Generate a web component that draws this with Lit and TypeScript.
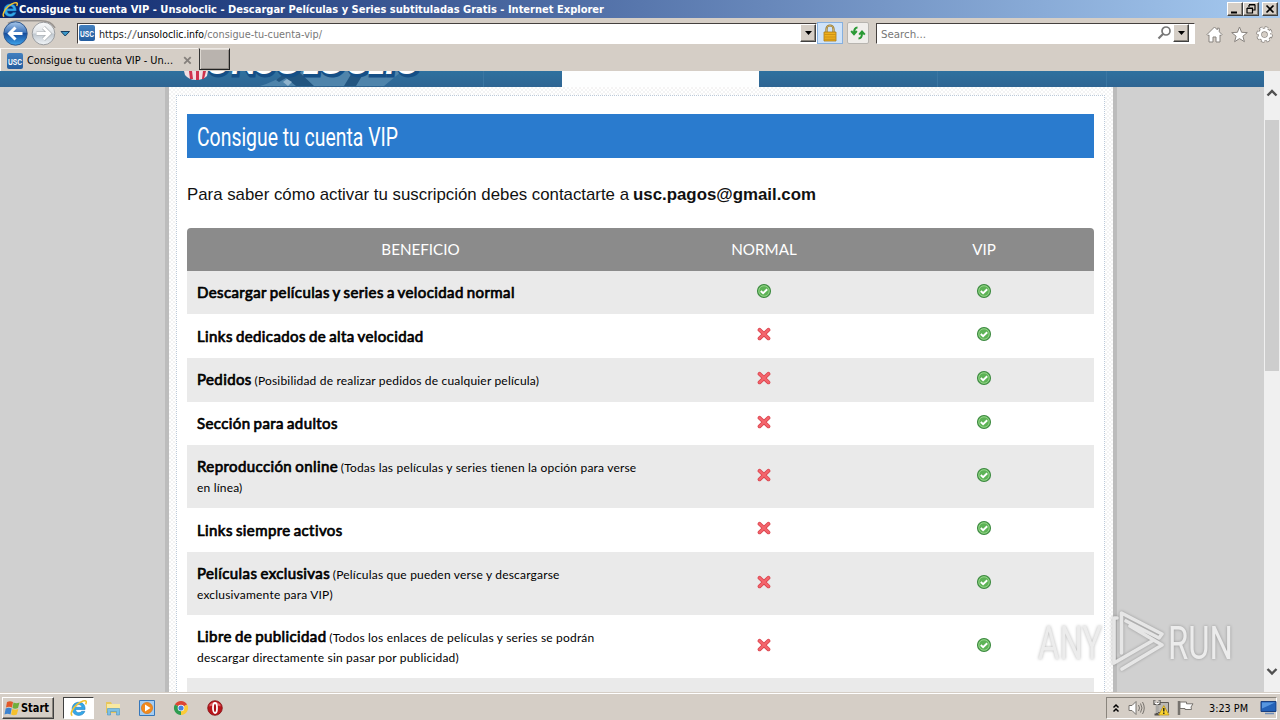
import { LitElement, html, svg, css, nothing } from 'lit';
import { customElement, property } from 'lit/decorators.js';

interface Benefit {
  name: string;
  note?: string[];
  normal: boolean;
}

const BENEFITS: Benefit[] = [
  { name: 'Descargar películas y series a velocidad normal', normal: true },
  { name: 'Links dedicados de alta velocidad', normal: false },
  { name: 'Pedidos', note: ['(Posibilidad de realizar pedidos de cualquier película)'], normal: false },
  { name: 'Sección para adultos', normal: false },
  { name: 'Reproducción online', note: ['(Todas las películas y series tienen la opción para verse', 'en línea)'], normal: false },
  { name: 'Links siempre activos', normal: false },
  { name: 'Películas exclusivas', note: ['(Películas que pueden verse y descargarse', 'exclusivamente para VIP)'], normal: false },
  { name: 'Libre de publicidad', note: ['(Todos los enlaces de películas y series se podrán', 'descargar directamente sin pasar por publicidad)'], normal: false },
];

// One line of text squeezed or stretched to a fixed width
@customElement('fit-text')
export class FitText extends LitElement {
  @property() text = '';
  @property({ type: Number }) width = 100;
  @property({ type: Number }) height = 16;
  @property({ type: Number }) base = 12;

  static styles = css`
    :host { display: block; flex: none; }
    svg { display: block; overflow: visible; }
    text { fill: currentColor; white-space: pre; }
  `;

  render() {
    return html`<svg width=${this.width} height=${this.height}>
      <text x="0" y=${this.base} textLength=${this.width} lengthAdjust="spacingAndGlyphs">${this.text}</text>
    </svg>`;
  }
}

const ieGlyph = svg`
  <path d="M14.2 9.4H5.2c.2 2 1.400 3 3.200 3 1.200 0 2-.4 2.600-1.300h3c-.9 2.500-2.900 3.900-5.700 3.900-3.800 0-6.300-2.500-6.300-6.200S4.600 2.600 8.300 2.600c3.900 0 6.100 2.600 5.900 6.800zM5.300 7.300h5.900c-.2-1.600-1.300-2.500-2.900-2.500s-2.700.9-3 2.500z" fill="#35a8e8" stroke="#1673b8" stroke-width=".5"/>
  <path d="M2.200 15.200C-.2 14 2 8.600 6.500 4.800 10.600 1.300 15 .1 15.300 2.200c.1.700-.2 1.500-.6 2.300" fill="none" stroke="#f2c230" stroke-width="1.500"/>`;

const tick = html`<svg width="16" height="16" viewBox="0 0 16 16">
  <circle cx="8" cy="8" r="6.500" fill="#5db356" stroke="#3f8a43" stroke-width="1.100"/>
  <circle cx="8" cy="8" r="5.200" fill="none" stroke="#9bd78e" stroke-width=".9"/>
  <path d="M4.800 8l2.300 2.200L11.200 6.200" fill="none" stroke="#fff" stroke-width="1.900"/>
</svg>`;

const cross = html`<svg width="16" height="16" viewBox="0 0 16 16">
  <path d="M3.600 3.900l8.800 8.400M12.400 3.900l-8.800 8.400" stroke="#d9434e" stroke-width="3.900" stroke-linecap="round"/>
  <path d="M3.700 4l8.600 8.200M12.300 4l-8.600 8.200" stroke="#f4656c" stroke-width="2.300" stroke-linecap="square"/>
</svg>`;

@customElement('usc-icon')
export class UscIcon extends LitElement {
  static styles = css`
    :host {
      display: block;
      flex: none;
      width: 16px;
      height: 16px;
      border-radius: 2px;
      background: linear-gradient(#4380bf, #245d9f);
    }
    text { font: bold 9px 'Liberation Sans', sans-serif; fill: #fff; }
    svg { display: block; overflow: visible; }
  `;

  render() {
    return html`<svg width="16" height="16"><text x="1" y="11.500" textLength="14" lengthAdjust="spacingAndGlyphs">USC</text></svg>`;
  }
}

@customElement('browser-chrome')
export class BrowserChrome extends LitElement {
  static styles = css`
    :host {
      display: block;
      height: 71px;
      flex: none;
      background: #d5cec6;
      font: 11px 'DejaVu Sans Condensed', 'DejaVu Sans', sans-serif;
      color: #000;
    }
    svg { display: block; flex: none; }
    .title {
      display: flex;
      align-items: center;
      height: 18px;
      box-sizing: border-box;
      padding: 0 2px;
      background: linear-gradient(90deg, #0a246a, #a6caf0);
      color: #fff;
      font-weight: bold;
    }
    .title fit-text { margin-left: 1px; }
    .wins { display: flex; margin-left: auto; }
    .btn {
      box-sizing: border-box;
      width: 16px;
      height: 14px;
      background: #d5cec6;
      border: 1px solid;
      border-color: #fff #404040 #404040 #fff;
      box-shadow: inset -1px -1px #8a857d;
    }
    .btn.gap { margin-left: 3px; }
    .nav {
      display: flex;
      align-items: center;
      height: 30px;
      padding-left: 2px;
      box-sizing: border-box;
    }
    .field {
      display: flex;
      align-items: center;
      box-sizing: border-box;
      height: 21px;
      background: #fff;
      border: 1px solid;
      border-color: #45403e #fff #fff #45403e;
    }
    .address { width: 740px; margin-left: 5px; padding-left: 1px; color: #777; }
    .scheme { margin-left: 4px; color: #222; }
    .slashes { color: #777; }
    .host { color: #000; }
    .drop {
      box-sizing: border-box;
      width: 16px;
      height: 18px;
      margin-left: auto;
      background: #d5cec6;
      border: 1px solid;
      border-color: #fff #404040 #404040 #fff;
      box-shadow: inset -1px -1px #8a857d;
    }
    .tool {
      display: grid;
      place-items: center;
      box-sizing: border-box;
      width: 26px;
      height: 22px;
      border: 1px solid #86b0df;
      background: #cfe3f9;
    }
    .tool.refresh {
      width: 22px;
      margin-left: 4px;
      border-color: #b8b5b0;
      border-radius: 2px;
      background: #f0eeeb;
    }
    .search { width: 319px; margin-left: 7px; padding: 0 5px 0 4px; color: #777; }
    .search .mag { margin-left: auto; }
    .search .drop { margin-left: 1px; }
    .links { display: flex; gap: 8px; margin-left: 11px; padding-top: 3px; }
    .tabs { display: flex; height: 23px; }
    .tab {
      display: flex;
      align-items: center;
      box-sizing: border-box;
      width: 198px;
      padding: 1px 6px 0 6px;
      border-top: 1px solid #f6f3ef;
      border-left: 1px solid #fff;
    }
    .tab fit-text { margin-left: 4px; }
    .tab svg { margin-left: auto; }
    .newtab {
      box-sizing: border-box;
      width: 31px;
      height: 22px;
      margin-left: 1px;
      background: #b9b3ae;
      border: 1px solid;
      border-color: #ece8e4 #222 #222 #333;
      box-shadow: inset 1px 1px #ddd8d2, inset -1px -1px #918b86;
    }
  `;

  private _dropArrow() {
    return html`<svg width="14" height="16"><path d="M4 6h7L7.500 10z" fill="#000"/></svg>`;
  }

  render() {
    return html`
      <div class="title">
        <svg width="16" height="17" viewBox="0 0 16 16">${ieGlyph}</svg>
        <fit-text text="Consigue tu cuenta VIP - Unsoloclic - Descargar Películas y Series subtituladas Gratis - Internet Explorer" width="585" height="18" base="13"></fit-text>
        <div class="wins">
          <div class="btn"><svg width="14" height="12"><path d="M3 9.500h6" stroke="#000" stroke-width="2"/></svg></div>
          <div class="btn"><svg width="14" height="12"><path d="M5 2h6v5H9M5 1.500h6M5 2v2M3 5.500h5.500v4.500H3zM3 5h6" fill="none" stroke="#000" stroke-width="1.200"/></svg></div>
          <div class="btn gap"><svg width="14" height="12"><path d="M3.500 2.500l7 7M10.500 2.500l-7 7" stroke="#000" stroke-width="1.700"/></svg></div>
        </div>
      </div>
      <div class="nav">
        <svg width="70" height="30" viewBox="2 18 70 30">
          <defs>
            <linearGradient id="back" x2="0" y2="1">
              <stop offset="0" stop-color="#a9c8ea"/><stop offset=".45" stop-color="#3d74bb"/>
              <stop offset=".5" stop-color="#164d9d"/><stop offset="1" stop-color="#3fa5ec"/>
            </linearGradient>
            <linearGradient id="fwd" x2="0" y2="1">
              <stop offset="0" stop-color="#f9fafb"/><stop offset=".48" stop-color="#dfe3e7"/>
              <stop offset=".52" stop-color="#bfc7cf"/><stop offset="1" stop-color="#f1f5f8"/>
            </linearGradient>
          </defs>
          <path d="M8 23.500q4-2.800 9-2.700h24q10 0 14 7" fill="none" stroke="#98938f" stroke-width="1.600"/>
          <circle cx="15.500" cy="33.500" r="11.700" fill="url(#back)" stroke="#31598e"/>
          <circle cx="43.500" cy="33.500" r="11.300" fill="url(#fwd)" stroke="#9b9da0"/>
          <path d="M22.500 33.500H10M15.500 27.500l-6 6 6 6" fill="none" stroke="#fff" stroke-width="3"/>
          <path d="M36.500 33.500H49M43.500 27.500l6 6-6 6" fill="none" stroke="#a8acb0" stroke-width="4"/>
          <path d="M36.500 33.500H49M43.500 27.500l6 6-6 6" fill="none" stroke="#fff" stroke-width="2.800"/>
          <path d="M61 31.500h8.500L65.200 36z" fill="#3b98c9" stroke="#173e61"/>
        </svg>
        <div class="field address">
          <usc-icon></usc-icon>
          <fit-text class="scheme" text="https:" width="28" height="19" base="14"></fit-text>
          <fit-text class="slashes" text="//" width="10" height="19" base="14"></fit-text>
          <fit-text class="host" text="unsoloclic.info" width="67" height="19" base="14"></fit-text>
          <fit-text text="/consigue-tu-cuenta-vip/" width="118" height="19" base="14"></fit-text>
          <div class="drop">${this._dropArrow()}</div>
        </div>
        <div class="tool">
          <svg width="16" height="18" viewBox="0 0 16 18">
            <path d="M4.500 9V5a3.500 3.500 0 0 1 7 0v4" fill="none" stroke="#92742c" stroke-width="2.200"/>
            <path d="M4.500 9V5a3.500 3.500 0 0 1 7 0v4" fill="none" stroke="#d9bf79" stroke-width=".8"/>
            <path d="M2 8h12v9H2z" fill="#eeb01e" stroke="#a97812" stroke-width=".8"/>
            <path d="M2.500 10.500h11M2.500 13h11M2.500 15.300h11" stroke="#c58b12" stroke-width=".8"/>
          </svg>
        </div>
        <div class="tool refresh">
          <svg width="16" height="16" viewBox="0 0 16 16">
            <path d="M7.500 2.500Q4 2.500 4 8M1.200 6L4 9.300 6.800 6M8.500 13.500q3.500 0 3.500-5.500M9.200 9.700L12 6.500l2.800 3.200" fill="none" stroke="#2a9a35" stroke-width="2"/>
          </svg>
        </div>
        <div class="field search">
          <fit-text text="Search..." width="45" height="19" base="14"></fit-text>
          <svg class="mag" width="15" height="16"><circle cx="9" cy="6" r="4" fill="none" stroke="#777" stroke-width="1.700"/><path d="M6 9l-4.500 4.500" stroke="#777" stroke-width="2.200"/></svg>
          <div class="drop">${this._dropArrow()}</div>
        </div>
        <div class="links">
          <svg width="17" height="17" viewBox="0 0 17 17"><path d="M1 8.500L8.500 1l2.800 2.800V2.200h2v3.600L16 8.500l-1 1.200-1-.8V16h-4v-5H7v5H3V8.900l-1 .8z" fill="#fff" stroke="#88837e"/></svg>
          <svg width="17" height="17" viewBox="0 0 17 17"><path d="M8.500 1l2.100 5.300 5.700.3-4.400 3.600 1.500 5.500-4.900-3.100-4.900 3.100 1.500-5.500L.7 6.600l5.700-.3z" fill="#fff" stroke="#88837e"/></svg>
          <svg width="17" height="17" viewBox="0 0 17 17">
            <circle cx="8.500" cy="8.500" r="6.800" fill="none" stroke="#88837e" stroke-width="3" stroke-dasharray="3.300 2.040"/>
            <circle cx="8.500" cy="8.500" r="4.700" fill="none" stroke="#88837e" stroke-width="4.200"/>
            <circle cx="8.500" cy="8.500" r="6.500" fill="none" stroke="#fff" stroke-width="2" stroke-dasharray="2.500 2.600"/>
            <circle cx="8.500" cy="8.500" r="4.600" fill="none" stroke="#fff" stroke-width="2.700"/>
          </svg>
        </div>
      </div>
      <div class="tabs">
        <div class="tab">
          <usc-icon></usc-icon>
          <fit-text text="Consigue tu cuenta VIP - Un..." width="146" height="20" base="13"></fit-text>
          <svg width="9" height="9"><path d="M1.200 1.200l6.500 6.500M7.700 1.200L1.200 7.700" stroke="#85807c" stroke-width="1.800"/></svg>
        </div>
        <div class="newtab"></div>
      </div>
    `;
  }
}

@customElement('site-page')
export class SitePage extends LitElement {
  static styles = css`
    :host {
      display: flex;
      flex: 1;
      min-height: 0;
      font-family: Lato, sans-serif;
      color: #000;
    }
    svg { display: block; }
    .view {
      display: flex;
      flex-direction: column;
      width: 1264px;
      background: #d0d0d0;
      overflow: hidden;
    }
    .header {
      display: flex;
      flex: none;
      height: 16px;
      overflow: hidden;
      background: linear-gradient(#2f719f, #2f6593);
    }
    .logo { width: 483px; flex: none; }
    .logo text { font: italic 900 34px Lato, sans-serif; }
    .sep { flex: none; box-sizing: border-box; border-left: 1px solid #3b76a2; }
    .s1 { width: 79px; }
    .on { width: 197px; background: #fdfefe; }
    .s2 { width: 178px; border: 0; }
    .s3 { width: 169px; }
    .s4 { flex: 1; }
    .wrap {
      flex: 1;
      min-height: 0;
      display: flex;
      box-sizing: border-box;
      width: 952px;
      margin-left: 165px;
      padding: 8px 8px 0 7px;
      border: solid #bcbcbc;
      border-width: 0 4px;
      background: repeating-conic-gradient(#f4f4f4 0 25%, #fff 0 50%) 0 0 / 4px 4px;
    }
    .box {
      flex: 1;
      min-height: 0;
      overflow: hidden;
      box-sizing: border-box;
      padding: 18px 10px 0;
      border: 1px dotted #bccada;
      border-bottom: 0;
      background: #fff;
    }
    h1 {
      display: flex;
      align-items: center;
      box-sizing: border-box;
      height: 44px;
      margin: 0;
      padding-left: 10px;
      background: #2a7bce;
      color: #fff;
      font: 400 25.500px Roboto, sans-serif;
      -webkit-text-stroke: .4px #fff;
    }
    p {
      display: flex;
      align-items: center;
      height: 70px;
      margin: 0;
      padding-top: 4px;
      box-sizing: border-box;
      font: 17px 'Liberation Sans', Arial, sans-serif;
      color: #111;
    }
    .mail { margin-left: 4px; font-weight: bold; }
    .row {
      display: grid;
      grid-template-columns: 467px 220px 220px;
      align-items: center;
      justify-items: center;
      box-sizing: border-box;
      height: 43.6px;
      padding-top: 1.4px;
    }
    .row.tall { height: 63.1px; }
    .row.odd { background: #eaeaea; }
    .row.head {
      height: 42.8px;
      padding: 0 0 1px;
      border-radius: 4px 4px 0 0;
      background: #8b8b8b;
      color: #fff;
      font-size: 15.2px;
    }
    .cell {
      justify-self: start;
      padding-left: 10px;
      font-size: 12px;
      line-height: 20.500px;
      letter-spacing: .19px;
      white-space: nowrap;
    }
    .cell b {
      font-size: 15px;
      font-weight: 400;
      letter-spacing: .4px;
      word-spacing: -1.1px;
      margin-right: -.5px;
      -webkit-text-stroke: .7px #000;
    }
    .mark { margin-top: -5px; }
    .bar {
      display: flex;
      flex-direction: column;
      width: 16px;
      background: #f0f0f0;
    }
    .thumb { height: 251px; margin: 18px 0 auto 1px; width: 14px; background: #cdcdcd; }
    .up { margin-top: 15px; }
    .down { margin-bottom: 13px; }
  `;

  private _row(item: Benefit, index: number) {
    const tall = item.note && item.note.length > 1;
    return html`
      <div class="row ${index % 2 ? '' : 'odd'} ${tall ? 'tall' : ''}">
        <div class="cell"><b>${item.name}</b>${item.note ? html` ${item.note.map((line, i) => html`${i ? html`<br>` : nothing}${line}`)}` : nothing}</div>
        <div class="mark">${item.normal ? tick : cross}</div>
        <div class="mark">${tick}</div>
      </div>
    `;
  }

  render() {
    return html`
      <div class="view">
        <div class="header">
          <svg class="logo" width="483" height="16">
            <path d="M292 0h110l-18 15H260q14-4 32-15z" fill="#4f84ab"/>
            <path d="M276 9l12-9h10l16 15h-18l-10-8-7 4zM353 0h12l-9 15h-12z" fill="#225580"/>
            <path d="M283 11l4-3 5 3-4 4z" fill="#8fb3cd"/>
            <path d="M184 0h24l-1 5q-4 4-11 4t-11-5z" fill="#f1dfe3"/>
            <path d="M189 0h3l1 8h-3zM196 0h3v9h-3zM203 0h3l-2 8h-2z" fill="#cf334d"/>
            <text x="207" y="4.500" fill="#154f86" stroke="#154f86" stroke-width="3" textLength="212" lengthAdjust="spacingAndGlyphs">UNSOLOCLIC</text>
            <text x="206" y="2.500" fill="#fff" textLength="211" lengthAdjust="spacingAndGlyphs">UNSOLOCLIC</text>
          </svg>
          <div class="sep s1"></div>
          <div class="on"></div>
          <div class="sep s2"></div>
          <div class="sep s3"></div>
          <div class="sep s4"></div>
        </div>
        <div class="wrap">
          <div class="box">
            <h1><fit-text text="Consigue tu cuenta VIP" width="201" height="44" base="32"></fit-text></h1>
            <p>
              <fit-text text="Para saber cómo activar tu suscripción debes contactarte a" width="442" height="22" base="16"></fit-text>
              <fit-text class="mail" text="usc.pagos@gmail.com" width="183" height="22" base="16"></fit-text>
            </p>
            <div class="row head"><span>BENEFICIO</span><span>NORMAL</span><span>VIP</span></div>
            ${BENEFITS.map((item, i) => this._row(item, i))}
            <div class="row odd"></div>
          </div>
        </div>
      </div>
      <div class="bar">
        <svg class="up" width="16" height="16"><path d="M3.500 9.500L8 5l4.500 4.500" fill="none" stroke="#505050" stroke-width="2.400"/></svg>
        <div class="thumb"></div>
        <svg class="down" width="16" height="16"><path d="M3.500 6L8 10.500 12.500 6" fill="none" stroke="#505050" stroke-width="2.400"/></svg>
      </div>
    `;
  }
}

@customElement('task-bar')
export class TaskBar extends LitElement {
  static styles = css`
    :host {
      display: flex;
      flex: none;
      align-items: center;
      box-sizing: border-box;
      height: 28px;
      padding: 2px 3px 0 2px;
      border-top: 1px solid #d5cec6;
      box-shadow: inset 0 1px #fff;
      background: #d5cec6;
      font: 11px 'DejaVu Sans Condensed', 'DejaVu Sans', sans-serif;
      color: #000;
    }
    svg { display: block; flex: none; }
    .start {
      display: flex;
      align-items: center;
      box-sizing: border-box;
      width: 52px;
      height: 22px;
      padding-left: 1px;
      border: 1px solid;
      border-color: #fff #404040 #404040 #fff;
      box-shadow: inset -1px -1px #8a857d;
      font-size: 12px;
      font-weight: bold;
    }
    .active {
      display: grid;
      place-items: center;
      box-sizing: border-box;
      width: 31px;
      height: 22px;
      margin-left: 9px;
      border: 1px solid;
      border-color: #404040 #fff #fff #404040;
      background: #fff;
    }
    .apps { display: flex; gap: 18px; margin-left: 11px; }
    .tray {
      display: flex;
      align-items: center;
      box-sizing: border-box;
      width: 171px;
      height: 22px;
      margin-left: auto;
      padding-left: 5px;
      border: 1px solid;
      border-color: #8a857d #fff #fff #8a857d;
    }
    .vol { margin-left: 8px; }
    .net { margin-left: 7px; }
    .flag { margin-left: 7px; }
    .tray fit-text { margin-left: 15px; }
    .desk { margin-left: 12px; }
  `;

  render() {
    return html`
      <div class="start">
        <svg width="17" height="18" viewBox="0 0 17 18">
          <path d="M3 3q3-1.500 6 0L8 8.500Q5 7 2 8.500z" fill="#e2592a"/>
          <path d="M9.500 3.500q3 1.500 6 0L14 9q-3 1.500-5.500 0z" fill="#6fae3c"/>
          <path d="M1.700 9.500q3-1.500 6 0l-1.200 6q-3-1.500-6 0z" fill="#3c83d0"/>
          <path d="M8.300 10q3 1.500 6 0l-1.500 5.500q-3 1.500-5.700 0z" fill="#f5c02d"/>
        </svg>
        <fit-text text="Start" width="28" height="18" base="13"></fit-text>
      </div>
      <div class="active"><svg width="17" height="18" viewBox="0 0 16 16">${ieGlyph}</svg></div>
      <div class="apps">
        <svg width="16" height="16" viewBox="0 0 16 16">
          <path d="M1 2h5l1 2h7v9H1z" fill="#e7c65d"/><path d="M2 4h13v7H2z" fill="#f8e9a0"/>
          <path d="M2.500 8.500h12V15h-3v-3.500h-6V15h-3z" fill="#7cc0e5" stroke="#4d94c1" stroke-width=".6"/>
        </svg>
        <svg width="16" height="16" viewBox="0 0 16 16">
          <path d="M.5.500h15v15H.5z" fill="#a5cdf2" stroke="#3677ba"/>
          <circle cx="8" cy="8" r="5.600" fill="#f28a1d" stroke="#d66e0b" stroke-width=".6"/>
          <path d="M6 4.500v7L11.500 8z" fill="#fff"/>
        </svg>
        <svg width="16" height="16" viewBox="0 0 16 16">
          <path d="M8 8L1.900 4.500A7 7 0 0 1 14.100 4.500z" fill="#dc4635"/>
          <path d="M8 8V15A7 7 0 0 1 1.900 4.500z" fill="#2e9c50"/>
          <path d="M8 8l6.100-3.500A7 7 0 0 1 8 15z" fill="#fbcb38"/>
          <circle cx="8" cy="8" r="3.300" fill="#fff"/><circle cx="8" cy="8" r="2.600" fill="#4582e2"/>
        </svg>
        <svg width="16" height="16" viewBox="0 0 16 16">
          <circle cx="8" cy="8" r="7.300" fill="#b9151b" stroke="#831115" stroke-width=".8"/>
          <path d="M2.500 4.500q5.500-5 11 0v2q-5-3-11 0z" fill="#e4666a"/>
          <ellipse cx="8" cy="8" rx="2" ry="5" fill="#a90e15" stroke="#fff" stroke-width="1.800"/>
        </svg>
      </div>
      <div class="tray">
        <svg width="8" height="10"><path d="M1.500 4.500L4 2l2.500 2.500M1.500 8.500L4 6l2.500 2.500" fill="none" stroke="#000" stroke-width="1.500"/></svg>
        <svg class="vol" width="18" height="16" viewBox="0 0 18 16">
          <path d="M1 5.500h3L8 1.500v13l-4-4H1z" fill="#fff" stroke="#77736e"/>
          <path d="M10.500 5q2 3 0 6M12.500 3.500q3 4.500 0 9M14.500 2q3.500 6 0 12" fill="none" stroke="#77736e"/>
        </svg>
        <svg class="net" width="17" height="17" viewBox="0 0 17 17">
          <path d="M4.500 3.500h11v10h-11z" fill="#bbb8b3" stroke="#5e5b57"/>
          <path d="M1.500 1v4h5V1M4 5v10M1.500 15.500h5" fill="none" stroke="#55524f" stroke-width="2.200"/>
          <path d="M2 1.500v3h4v-3M4 5v9" fill="none" stroke="#fff"/>
          <path d="M10.800 6.500l5.200 9.500H5.700z" fill="#fbd42f" stroke="#b58c0e" stroke-width=".7"/>
          <path d="M10.800 9v3.500M10.800 13.500v1.400" stroke="#222" stroke-width="1.400"/>
        </svg>
        <svg class="flag" width="17" height="16" viewBox="0 0 17 16">
          <path d="M2 1v14" stroke="#77736e" stroke-width="2.500"/>
          <path d="M3 2h6.500v1.800H16l-2 3.200.5 2.500H8V8.500H3z" fill="#fff" stroke="#77736e"/>
        </svg>
        <fit-text text="3:23 PM" width="39" height="18" base="13"></fit-text>
        <svg class="desk" width="17" height="15" viewBox="0 0 17 15">
          <path d="M1 1.500h15v10H1z" fill="#2462b8" stroke="#1a3f7e"/><path d="M2 2.500h13l-13 6z" fill="#5796df"/>
          <path d="M5 13.500h9" stroke="#6f8eb9" stroke-width="1.500"/>
        </svg>
      </div>
    `;
  }
}

@customElement('app-root')
export class AppRoot extends LitElement {
  static styles = css`
    :host {
      display: flex;
      flex-direction: column;
      position: relative;
      width: 1280px;
      height: 720px;
      overflow: hidden;
    }
    .stamp {
      position: absolute;
      left: 1030px;
      top: 604px;
      overflow: visible;
      filter: drop-shadow(0 0 1.500px rgba(0, 0, 0, .28));
    }
    .stamp text { font: 400 46px Roboto, sans-serif; fill: #ececec; }
    .stamp path { fill: none; stroke: #e6e6e6; stroke-width: 3.600; stroke-linejoin: round; stroke-linecap: round; }
  `;

  render() {
    return html`
      <browser-chrome></browser-chrome>
      <site-page></site-page>
      <task-bar></task-bar>
      <svg class="stamp" width="210" height="74">
        <text x="8" y="55" textLength="64" lengthAdjust="spacingAndGlyphs">ANY</text>
        <path d="M87 14L84 14V57M91.500 49V9L132 30L129 34L96 17M84 59L122 37M92 65L132 41L100 22"/>
        <text x="138" y="55" textLength="65" lengthAdjust="spacingAndGlyphs">RUN</text>
      </svg>
    `;
  }
}
